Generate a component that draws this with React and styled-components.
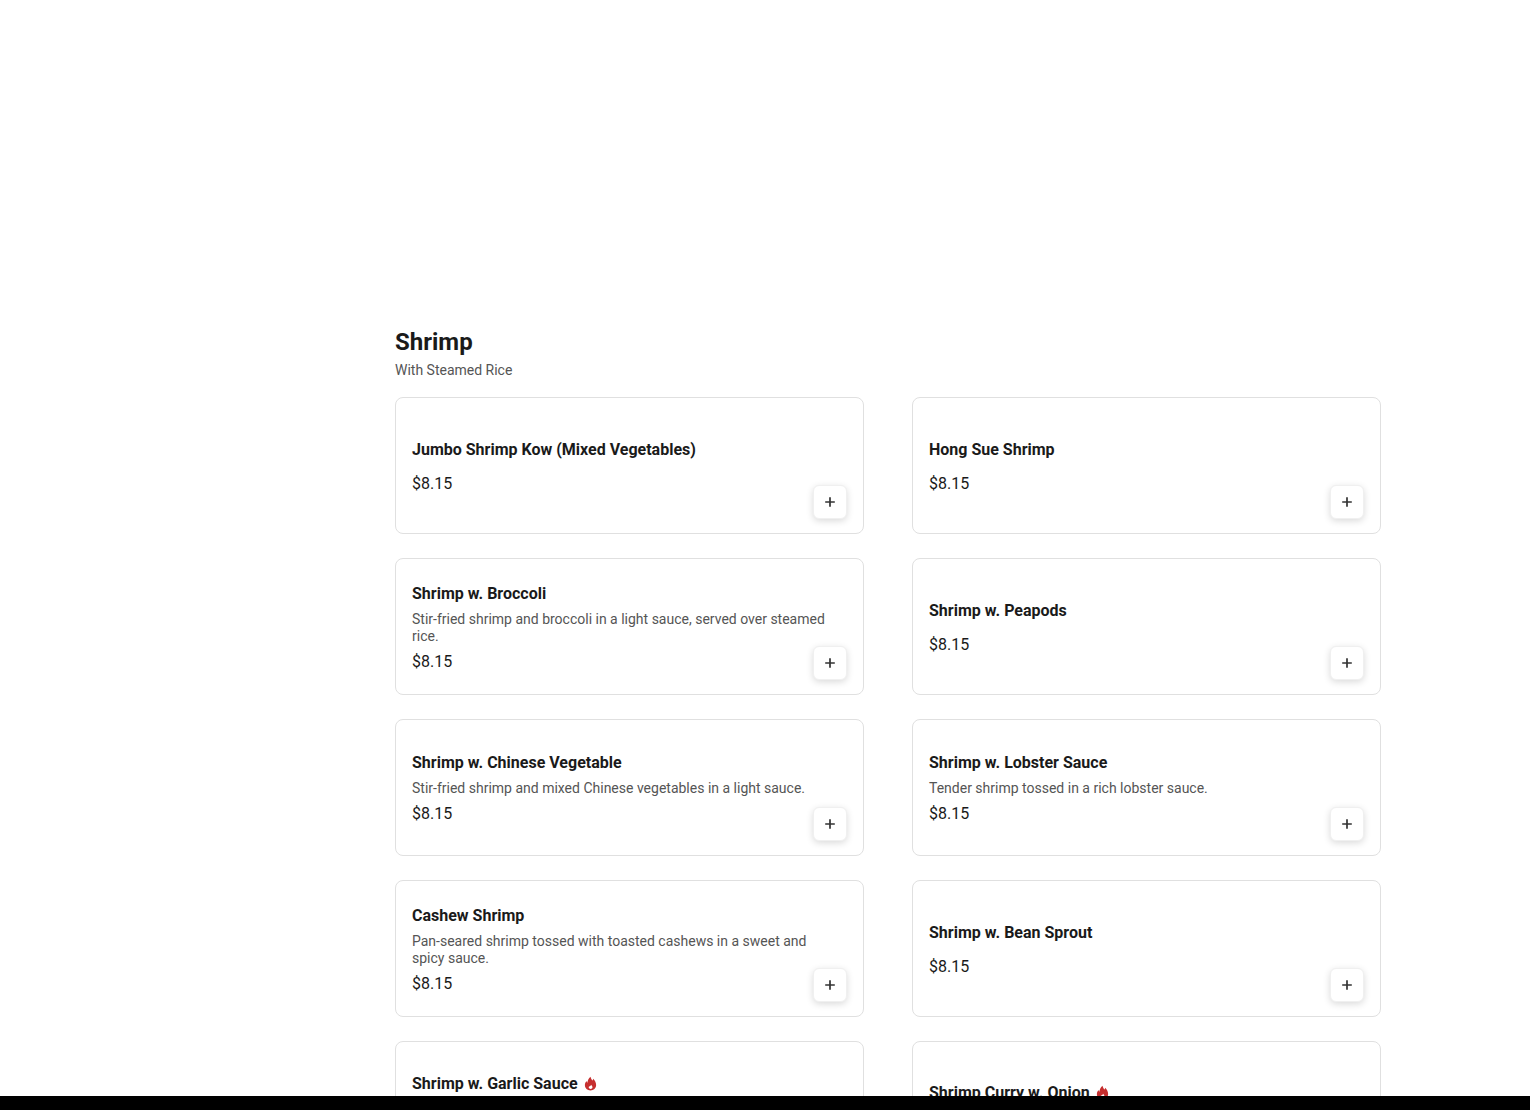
import React from 'react';
import styled, { createGlobalStyle } from 'styled-components';

const Global = createGlobalStyle`
  html, body { margin: 0; padding: 0; height: 100%; overflow: hidden; background: #fff; }
  body { font-family: Roboto, "Liberation Sans", sans-serif; color: #1a1a1a; }
  * { box-sizing: border-box; }
`;

const Page = styled.div`
  width: 1530px;
  height: 1110px;
  overflow: hidden;
  display: grid;
  grid-template-columns: 395px 986px 149px;
`;

const Section = styled.main`
  grid-column: 2;
  padding-top: 328px;
`;

const Heading = styled.h2`
  margin: 0;
  font-size: 24px;
  line-height: 29px;
  font-weight: 700;
  color: #1a1a1a;
`;

const Subheading = styled.p`
  margin: 5px 0 18px;
  font-size: 14px;
  line-height: 17px;
  color: #555;
`;

const Grid = styled.div`
  display: grid;
  grid-template-columns: 469px 469px;
  column-gap: 48px;
  row-gap: 24px;
`;

const Card = styled.article`
  position: relative;
  height: 137px;
  padding: 17px 16px 16px;
  border: 1px solid #e0e0e0;
  border-radius: 8px;
  background: #fff;
  display: flex;
  flex-direction: column;
  justify-content: center;
`;

const Title = styled.h3`
  margin: 0 0 ${p => (p.$hot ? '10px' : '8px')};
  font-size: 16px;
  line-height: 19px;
  font-weight: 700;
  color: #1a1a1a;
  display: flex;
  align-items: center;
  gap: 5px;
`;

const Description = styled.p`
  margin: 0 0 7px;
  padding-right: 20px;
  font-size: 14px;
  line-height: 17px;
  color: #555;
`;

const Price = styled.span`
  font-size: 16px;
  line-height: 19px;
  font-weight: 400;
  color: #1a1a1a;
`;

const AddButton = styled.button`
  position: absolute;
  right: 16px;
  bottom: 14px;
  width: 34px;
  height: 34px;
  padding: 0;
  display: flex;
  align-items: center;
  justify-content: center;
  background: #fff;
  border: 1px solid #f0f0f0;
  border-radius: 6px;
  box-shadow: 0 2px 7px rgba(0, 0, 0, 0.15);
  color: #333;
`;

const FlameIcon = styled.svg`
  width: 15px;
  height: 15px;
  flex: none;
  color: #c62f2f;
`;

const BottomBar = styled.div`
  position: fixed;
  left: 0;
  right: 0;
  bottom: 0;
  height: 14px;
  background: #000;
`;

const items = [
  { name: 'Jumbo Shrimp Kow (Mixed Vegetables)' },
  { name: 'Hong Sue Shrimp' },
  { name: 'Shrimp w. Broccoli', desc: 'Stir-fried shrimp and broccoli in a light sauce, served over steamed rice.' },
  { name: 'Shrimp w. Peapods' },
  { name: 'Shrimp w. Chinese Vegetable', desc: 'Stir-fried shrimp and mixed Chinese vegetables in a light sauce.' },
  { name: 'Shrimp w. Lobster Sauce', desc: 'Tender shrimp tossed in a rich lobster sauce.' },
  { name: 'Cashew Shrimp', desc: 'Pan-seared shrimp tossed with toasted cashews in a sweet and spicy sauce.' },
  { name: 'Shrimp w. Bean Sprout' },
  { name: 'Shrimp w. Garlic Sauce', desc: 'Shrimp in a spicy garlic sauce.', hot: true },
  { name: 'Shrimp Curry w. Onion', hot: true },
];

const Plus = () => (
  <svg width="14" height="14" viewBox="0 0 14 14" fill="none" stroke="currentColor" strokeWidth="1.7">
    <path d="M7 2.2v9.6M2.2 7h9.6" />
  </svg>
);

const Flame = () => (
  <FlameIcon viewBox="0 0 24 24" fill="currentColor">
    <path
      fillRule="evenodd"
      d="M12 1c.6 3.2 2 4.6 3.4 6.2.5-.9.7-1.8.7-2.7C19 7.2 21 10.6 21 14.3 21 19.4 17 23 12 23S3 19.4 3 14.3c0-2.6 1.1-4.7 2.7-6.5.1 1.3.5 2.3 1.3 3.1C7.3 7 9 3.6 12 1zM12 20.6c1.8 0 3.1-1.2 3.1-2.8 0-1.5-1.1-2.6-2-4-.4 1.1-1 1.6-1.7 2.3-.9.7-2.3.9-2.3 2 0 1.4 1.3 2.5 2.9 2.5z"
    />
  </FlameIcon>
);

export default function App() {
  return (
    <>
      <Global />
      <Page>
        <Section>
          <Heading>Shrimp</Heading>
          <Subheading>With Steamed Rice</Subheading>
          <Grid>
            {items.map(item => (
              <Card key={item.name}>
                <Title $hot={item.hot}>
                  {item.name}
                  {item.hot && <Flame />}
                </Title>
                {item.desc ? <Description>{item.desc}</Description> : <Description />}
                <Price>$8.15</Price>
                <AddButton aria-label={`Add ${item.name}`}>
                  <Plus />
                </AddButton>
              </Card>
            ))}
          </Grid>
        </Section>
      </Page>
      <BottomBar />
    </>
  );
}
